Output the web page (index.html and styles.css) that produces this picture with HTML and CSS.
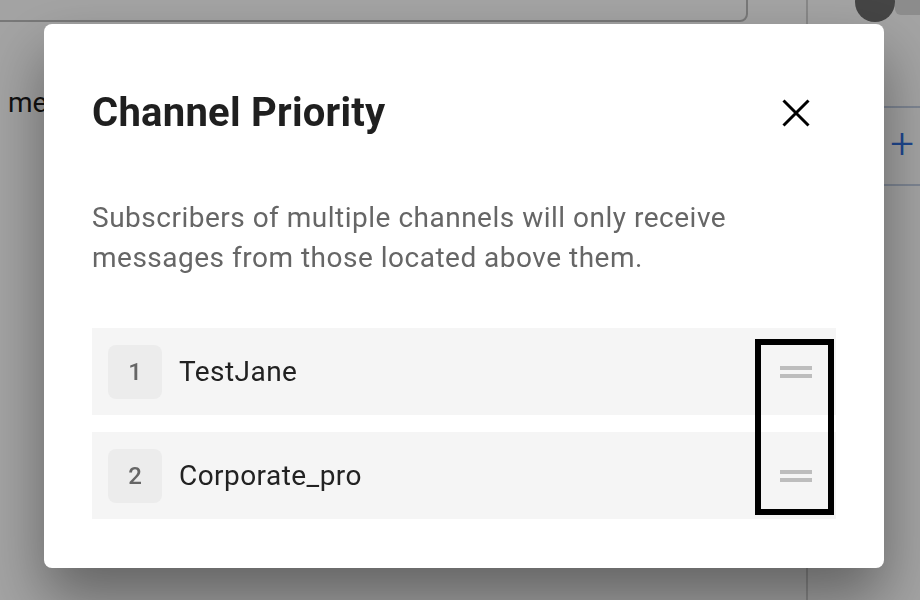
FILE: index.html
```html
<!DOCTYPE html>
<html lang="en">
<head>
<meta charset="utf-8">
<title>Channel Priority</title>
<link rel="stylesheet" href="styles.css">
</head>
<body>
<div class="app">
  <main class="main">
    <div class="search-box"></div>
    <p class="main-text">messages</p>
  </main>
  <aside class="sidebar">
    <div class="sidebar-top">
      <span class="avatar"></span>
      <span class="pill"></span>
    </div>
    <div class="sidebar-row add-row"><span class="plus">+</span></div>
  </aside>
</div>

<div class="overlay">
  <section class="modal" role="dialog" aria-labelledby="modal-title">
    <header class="modal-header">
      <h2 id="modal-title" class="modal-title">Channel Priority</h2>
      <button class="close-btn" aria-label="Close">
        <svg width="28" height="28" viewBox="0 0 28 28"><path d="M1.5 1.5 L26.5 26.5 M26.5 1.5 L1.5 26.5" stroke="#000" stroke-width="3" fill="none"/></svg>
      </button>
    </header>
    <p class="modal-desc">Subscribers of multiple channels will only receive messages from those located above them.</p>
    <div class="channel-list">
      <div class="channel-row">
        <span class="channel-num">1</span>
        <span class="channel-name">TestJane</span>
        <span class="drag-handle"><i></i><i></i></span>
      </div>
      <div class="channel-row">
        <span class="channel-num">2</span>
        <span class="channel-name">Corporate_pro</span>
        <span class="drag-handle"><i></i><i></i></span>
      </div>
      <div class="highlight-box"></div>
    </div>
  </section>
</div>
</body>
</html>
```

FILE: styles.css
```css
* { box-sizing: border-box; }
html, body { margin: 0; padding: 0; }
body {
  width: 920px;
  height: 600px;
  overflow: hidden;
  font-family: Roboto, "Liberation Sans", sans-serif;
  background: #fff;
}

.app {
  display: flex;
  height: 600px;
}
.main {
  flex: 1;
  min-width: 0;
}
.search-box {
  width: 760px;
  height: 62px;
  margin-top: -40px;
  margin-left: -12px;
  border: 2px solid #bcbcbc;
  border-radius: 8px;
}
.main-text {
  margin: 0;
  padding: 64px 0 0 8px;
  font-size: 28px;
  color: #1c1c1c;
  line-height: 34px;
}
.sidebar {
  width: 114px;
  flex-shrink: 0;
  border-left: 2px solid #d4d4d4;
  display: flex;
  flex-direction: column;
}
.sidebar-top {
  height: 108px;
  display: flex;
  align-items: flex-start;
  border-bottom: 2px solid #c4d0e4;
}
.avatar {
  flex-shrink: 0;
  width: 40px;
  height: 40px;
  margin-top: -18px;
  margin-left: 47px;
  border-radius: 50%;
  background: #6c6c6c;
}
.pill {
  flex: 1;
  height: 15px;
  background: #dcdcdc;
  border-radius: 0 0 0 6px;
}
.sidebar-row {
  height: 78px;
  border-bottom: 2px solid #c4d0e4;
}
.add-row {
  display: flex;
  align-items: center;
  justify-content: flex-end;
  padding-right: 6px;
}
.plus {
  color: #2f6fdf;
  font-size: 42px;
  font-weight: 300;
  line-height: 1;
  margin-top: -4px;
}

.overlay {
  position: fixed;
  inset: 0;
  background: rgba(0, 0, 0, 0.36);
  padding: 24px 0 0 44px;
}
.modal {
  width: 840px;
  height: 544px;
  background: #fff;
  border-radius: 8px;
  box-shadow: 0 30px 60px rgba(0, 0, 0, 0.4);
  padding: 65px 48px 0 48px;
}
.modal-header {
  display: flex;
  justify-content: space-between;
  align-items: center;
  height: 48px;
}
.modal-title {
  margin: 0;
  font-size: 40px;
  font-weight: 700;
  color: #1f1f1f;
  line-height: 48px;
  letter-spacing: 0.25px;
}
.close-btn {
  border: 0;
  background: none;
  padding: 0;
  margin-right: 26px;
  width: 28px;
  height: 28px;
  display: flex;
}
.modal-desc {
  margin: 61px 0 0 0;
  font-size: 28px;
  line-height: 40px;
  color: #666;
  letter-spacing: 0.5px;
}
.channel-list {
  position: relative;
  margin-top: 50px;
  display: flex;
  flex-direction: column;
  gap: 17px;
}
.channel-row {
  height: 87px;
  background: #f5f5f5;
  display: flex;
  align-items: center;
  padding: 0 24px 0 16px;
}
.channel-num {
  width: 54px;
  height: 54px;
  border-radius: 8px;
  background: #ececec;
  display: flex;
  align-items: center;
  justify-content: center;
  font-size: 24px;
  font-weight: 500;
  color: #666;
}
.channel-name {
  flex: 1;
  margin-left: 17px;
  font-size: 28px;
  color: #222;
  letter-spacing: 0.45px;
}
.drag-handle {
  width: 32px;
  display: flex;
  flex-direction: column;
  gap: 4px;
  margin-top: 1px;
}
.drag-handle i {
  display: block;
  height: 4px;
  background: #bdbdbd;
}
.highlight-box {
  position: absolute;
  left: 663px;
  top: 11px;
  width: 79px;
  height: 176px;
  border: 6px solid #000;
}
```
